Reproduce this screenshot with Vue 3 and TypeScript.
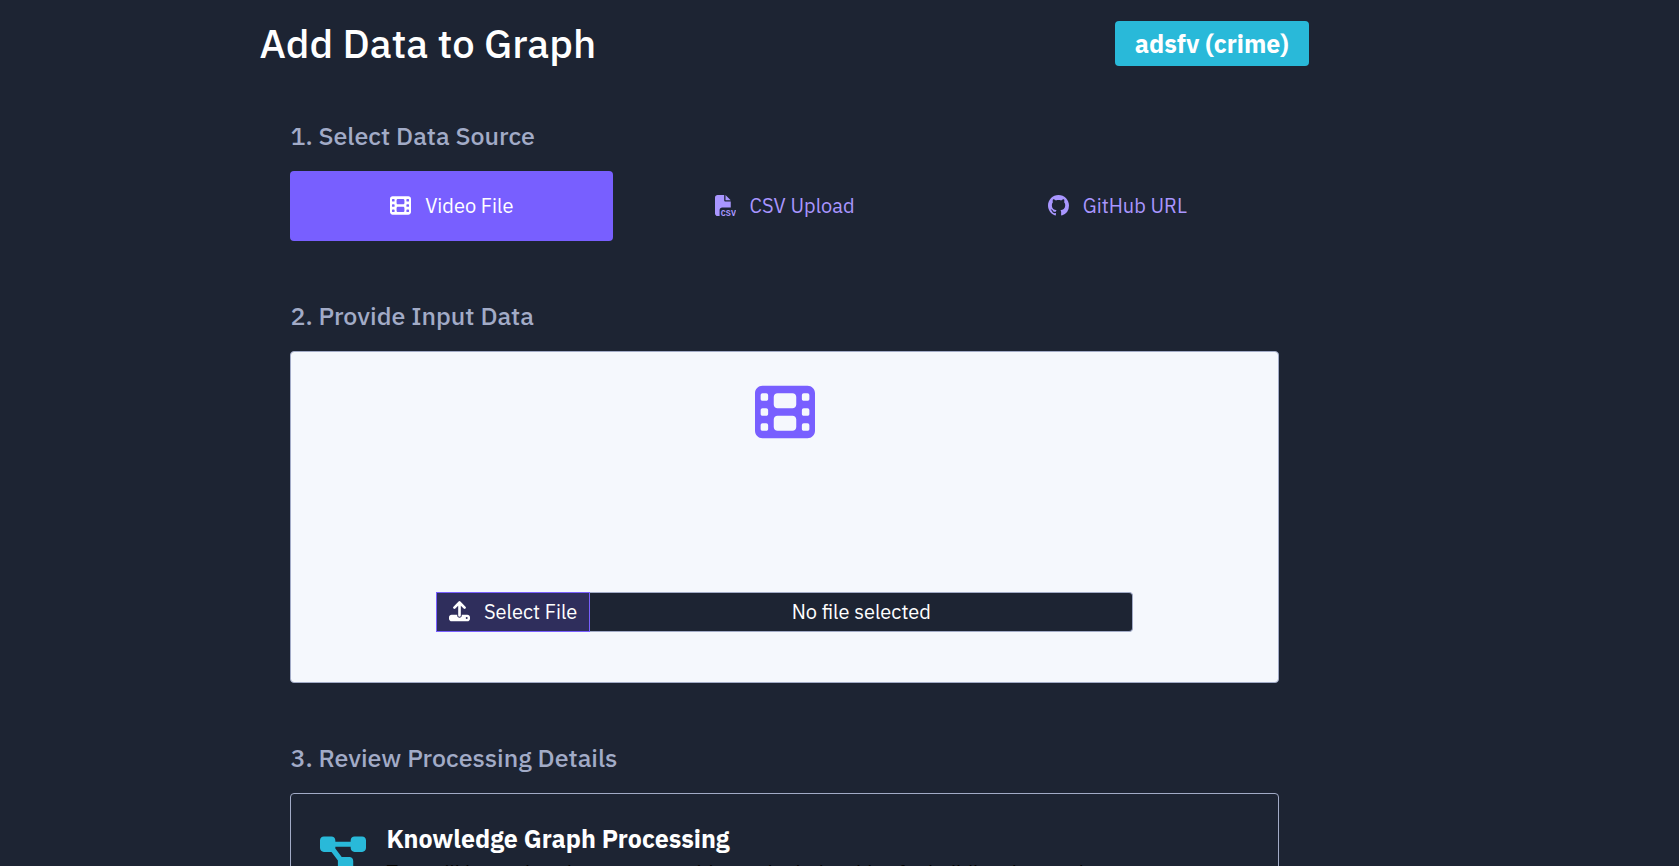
<script setup lang="ts">
import { ref } from 'vue'

type SourceId = 'video' | 'csv' | 'github'

interface Source {
  id: SourceId
  label: string
}

const sources: Source[] = [
  { id: 'video', label: 'Video File' },
  { id: 'csv', label: 'CSV Upload' },
  { id: 'github', label: 'GitHub URL' },
]

const selected = ref<SourceId>('video')
const fileName = ref('No file selected')
const picker = ref<HTMLInputElement | null>(null)

const filmPath =
  'M0 96C0 60.7 28.7 32 64 32H448c35.3 0 64 28.7 64 64V416c0 35.3-28.7 64-64 64H64c-35.3 0-64-28.7-64-64V96zM48 368v32c0 8.8 7.2 16 16 16H96c8.8 0 16-7.2 16-16V368c0-8.8-7.2-16-16-16H64c-8.8 0-16 7.2-16 16zm368-16c-8.8 0-16 7.2-16 16v32c0 8.8 7.2 16 16 16h32c8.8 0 16-7.2 16-16V368c0-8.8-7.2-16-16-16H416zM48 240v32c0 8.8 7.2 16 16 16H96c8.8 0 16-7.2 16-16V240c0-8.8-7.2-16-16-16H64c-8.8 0-16 7.2-16 16zm368-16c-8.8 0-16 7.2-16 16v32c0 8.8 7.2 16 16 16h32c8.8 0 16-7.2 16-16V240c0-8.8-7.2-16-16-16H416zM48 112v32c0 8.8 7.2 16 16 16H96c8.8 0 16-7.2 16-16V112c0-8.8-7.2-16-16-16H64c-8.8 0-16 7.2-16 16zM416 96c-8.8 0-16 7.2-16 16v32c0 8.8 7.2 16 16 16h32c8.8 0 16-7.2 16-16V112c0-8.8-7.2-16-16-16H416zM160 128v64c0 17.7 14.3 32 32 32H320c17.7 0 32-14.3 32-32V128c0-17.7-14.3-32-32-32H192c-17.7 0-32 14.3-32 32zm32 160c-17.7 0-32 14.3-32 32v64c0 17.7 14.3 32 32 32H320c17.7 0 32-14.3 32-32V320c0-17.7-14.3-32-32-32H192z'

function onPick(event: Event) {
  const file = (event.target as HTMLInputElement).files?.[0]
  fileName.value = file ? file.name : 'No file selected'
}
</script>

<template>
  <main class="page">
    <header class="top">
      <h1>Add Data to Graph</h1>
      <span class="badge">adsfv (crime)</span>
    </header>

    <section class="step">
      <h2>1. Select Data Source</h2>
      <div class="sources">
        <button
          v-for="source in sources"
          :key="source.id"
          type="button"
          class="source"
          :class="{ active: selected === source.id }"
          :aria-pressed="selected === source.id"
          @click="selected = source.id"
        >
          <svg v-if="source.id === 'video'" class="icon" viewBox="0 0 512 512" aria-hidden="true">
            <path :d="filmPath" />
          </svg>
          <svg v-else-if="source.id === 'csv'" class="icon" viewBox="0 0 512 512" aria-hidden="true">
            <path
              d="M0 64C0 28.7 28.7 0 64 0H224V128c0 17.7 14.3 32 32 32H384V304H176c-35.3 0-64 28.7-64 64V512H64c-35.3 0-64-28.7-64-64V64zm384 64H256V0L384 128z"
            />
            <text class="csv" x="142" y="508">CSV</text>
          </svg>
          <svg v-else class="icon" viewBox="0 0 16 16" aria-hidden="true">
            <path
              d="M8 0C3.58 0 0 3.58 0 8c0 3.54 2.29 6.53 5.47 7.59.4.07.55-.17.55-.38 0-.19-.01-.82-.01-1.49-2.01.37-2.53-.49-2.69-.94-.09-.23-.48-.94-.82-1.13-.28-.15-.68-.52-.01-.53.63-.01 1.08.58 1.23.82.72 1.21 1.87.87 2.33.66.07-.52.28-.87.51-1.07-1.78-.2-3.64-.89-3.64-3.95 0-.87.31-1.59.82-2.15-.08-.2-.36-1.02.08-2.12 0 0 .67-.21 2.2.82.64-.18 1.32-.27 2-.27s1.36.09 2 .27c1.53-1.04 2.2-.82 2.2-.82.44 1.1.16 1.92.08 2.12.51.56.82 1.27.82 2.15 0 3.07-1.87 3.75-3.65 3.95.29.25.54.73.54 1.48 0 1.07-.01 1.93-.01 2.2 0 .21.15.46.55.38A8.01 8.01 0 0 0 16 8c0-4.42-3.58-8-8-8z"
            />
          </svg>
          <span>{{ source.label }}</span>
        </button>
      </div>
    </section>

    <section class="step">
      <h2>2. Provide Input Data</h2>
      <div class="drop">
        <svg class="film" viewBox="0 0 512 512" aria-hidden="true"><path :d="filmPath" /></svg>
        <div class="file-row">
          <button type="button" class="select-file" @click="picker?.click()">
            <svg class="icon" viewBox="0 0 512 512" aria-hidden="true">
              <path
                fill-rule="evenodd"
                d="M64 336H200v16c0 31 25 56 56 56s56-25 56-56v-16H448c35 0 64 29 64 64v32c0 35-29 64-64 64H64c-35 0-64-29-64-64v-32c0-35 29-64 64-64zM432 392a24 24 0 1 0 0 48a24 24 0 1 0 0-48z"
              />
              <path class="arrow" d="M256 352V44M132 160L256 36L380 160" />
            </svg>
            <span>Select File</span>
          </button>
          <input class="file-name" type="text" readonly :value="fileName" aria-label="Selected file" />
          <input ref="picker" type="file" accept="video/*" hidden aria-label="Video file" @change="onPick" />
        </div>
      </div>
    </section>

    <section class="step">
      <h2>3. Review Processing Details</h2>
      <div class="details">
        <svg class="diagram" viewBox="0 0 576 512" aria-hidden="true">
          <path
            d="M0 80C0 53.5 21.5 32 48 32h96c26.5 0 48 21.5 48 48V96H384V80c0-26.5 21.5-48 48-48h96c26.5 0 48 21.5 48 48v96c0 26.5-21.5 48-48 48H432c-26.5 0-48-21.5-48-48V160H192v16c0 1.7-.1 3.4-.3 5L272 288h96c26.5 0 48 21.5 48 48v96c0 26.5-21.5 48-48 48H272c-26.5 0-48-21.5-48-48V336c0-1.7 .1-3.4 .3-5L144 224H48c-26.5 0-48-21.5-48-48V80z"
          />
        </svg>
        <div>
          <h3>Knowledge Graph Processing</h3>
          <p>Text will be analyzed to extract entities and relationships for building the graph.</p>
        </div>
      </div>
    </section>
  </main>
</template>

<style>
html {
  background: #1d2433;
  scrollbar-width: none;
}
body {
  margin: 0;
}
</style>

<style scoped>
.page {
  box-sizing: border-box;
  width: 62.5%;
  margin-left: 15.45%;
  padding: 20px 0;
  color: #fff;
  font-family: "IBM Plex Sans", "Noto Sans", sans-serif;
  font-size: 20px;
}
h1,
h2,
h3,
p {
  margin: 0;
}
.top {
  display: flex;
  align-items: center;
  justify-content: space-between;
  height: 46px;
}
h1 {
  font-size: 40px;
  font-weight: 500;
  line-height: 46px;
}
.badge {
  padding: 0 20px;
  border-radius: 4px;
  background: #29b9d9;
  font-size: 25px;
  font-weight: 700;
  line-height: 45px;
}
.step {
  padding: 0 30px 0 31px;
  margin-top: 59px;
}
.top + .step {
  margin-top: 54px;
}
h2 {
  color: #a2abc7;
  font-size: 25px;
  font-weight: 500;
  line-height: 32px;
  margin-bottom: 19px;
}
.sources {
  display: grid;
  grid-template-columns: repeat(3, 1fr);
  gap: 10px;
}
.source {
  display: flex;
  align-items: center;
  justify-content: center;
  gap: 14px;
  height: 70px;
  padding: 0 0 2px;
  border: 0;
  border-radius: 4px;
  background: transparent;
  color: #a996ff;
  font: inherit;
}
.source.active {
  background: #785fff;
  color: #fff;
}
.icon {
  flex: none;
  width: 21px;
  height: 21px;
  fill: currentColor;
}
.csv {
  font-family: "Liberation Mono", monospace;
  font-size: 205px;
  font-weight: 700;
}
.arrow {
  fill: none;
  stroke: currentColor;
  stroke-width: 64;
  stroke-linecap: round;
  stroke-linejoin: round;
}
.drop {
  display: flex;
  flex-direction: column;
  align-items: center;
  gap: 150px;
  padding: 30px 22px 50px;
  border: 1px solid #a2abc7;
  border-radius: 4px;
  background: #f5f8fd;
}
.film {
  width: 60px;
  height: 60px;
  fill: #785fff;
}
.file-row {
  display: flex;
  align-items: stretch;
  width: 74%;
  height: 40px;
}
.select-file {
  display: flex;
  align-items: center;
  gap: 14px;
  padding: 0 12px 2px;
  border: 1px solid #785fff;
  background: #2f2e5c;
  color: #fff;
  font: inherit;
  white-space: nowrap;
}
.file-name {
  flex: 1;
  min-width: 0;
  padding: 0 0 2px;
  border: 1px solid #a2abc7;
  border-left: 0;
  border-radius: 0 4px 4px 0;
  background: #1d2433;
  color: #fff;
  font: inherit;
  text-align: center;
}
.details {
  display: flex;
  gap: 20px;
  padding: 28px 29px;
  border: 1px solid #a2abc7;
  border-radius: 4px;
}
.diagram {
  flex: none;
  width: 46px;
  height: 41px;
  margin-top: 12px;
  fill: #29b9d9;
}
h3 {
  font-size: 25px;
  font-weight: 700;
  line-height: 34px;
  margin-bottom: 2px;
}
p {
  color: #000;
  line-height: 30px;
}
</style>
